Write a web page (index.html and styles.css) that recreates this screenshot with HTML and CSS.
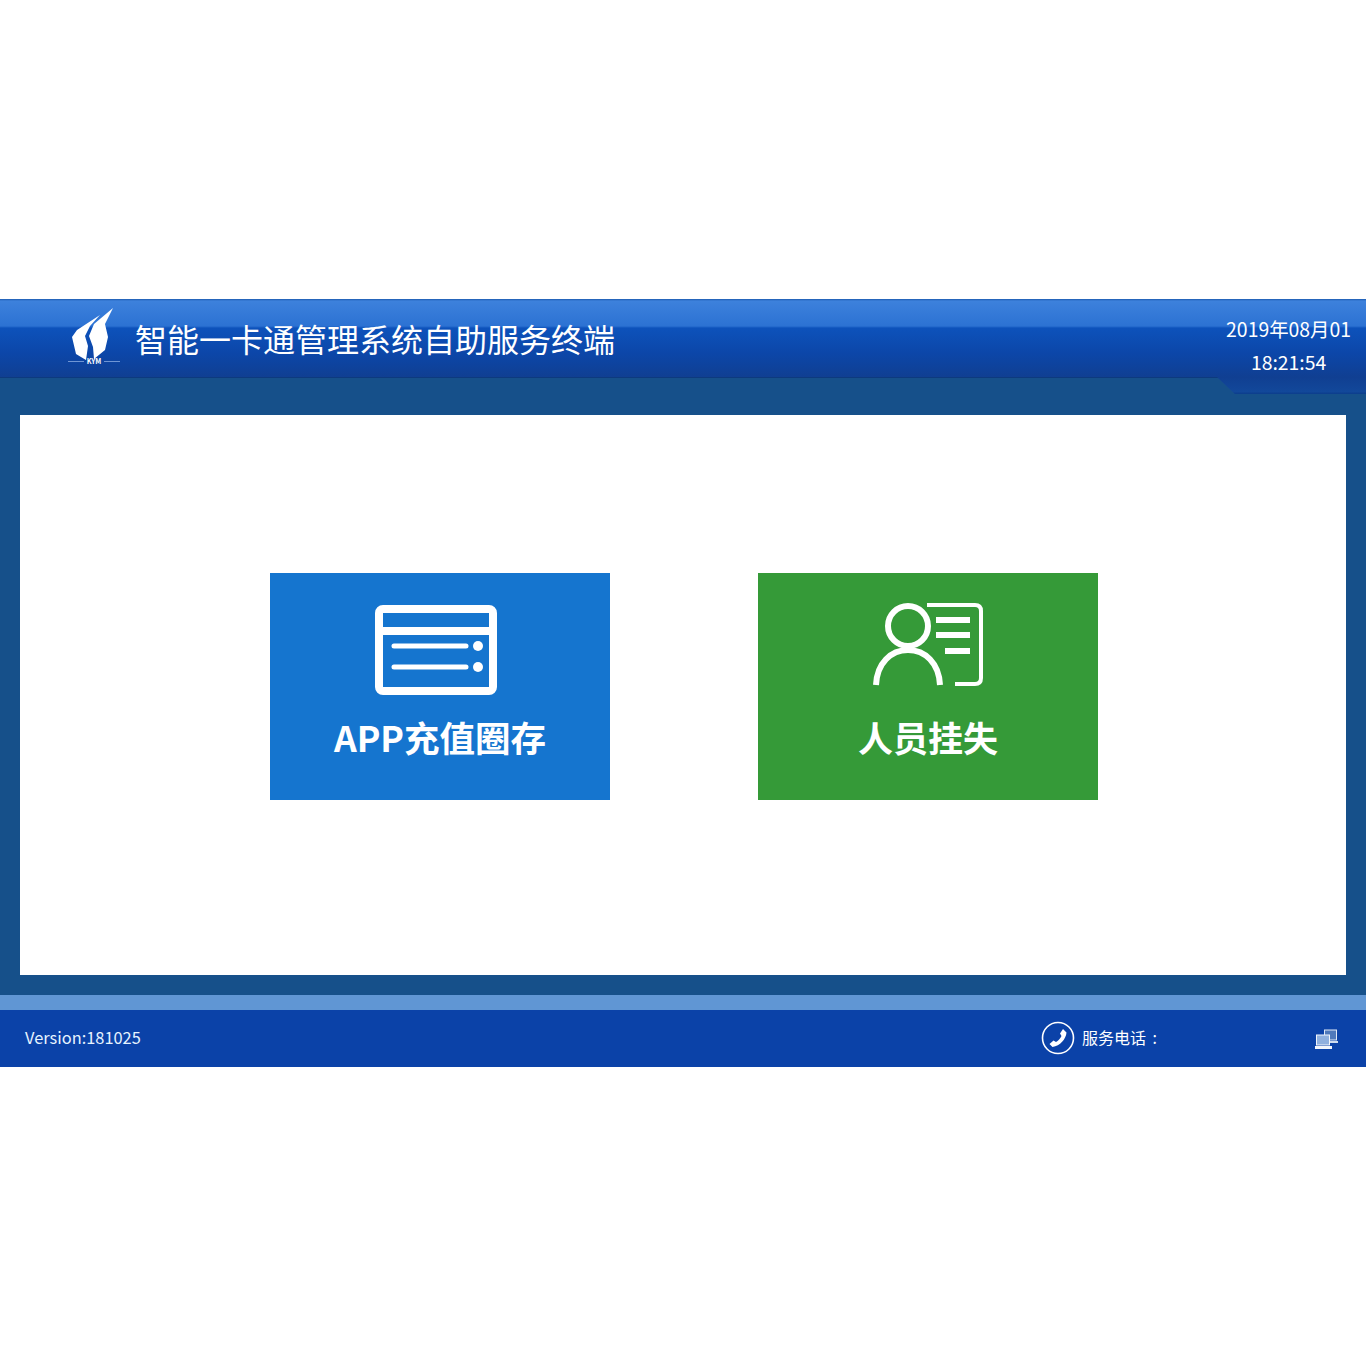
FILE: index.html
```html
<!DOCTYPE html>
<html>
<head>
  <title>智能一卡通管理系统自助服务终端</title>
  <link rel="stylesheet" href="styles.css">
</head>
<body>
  <div class="terminal">
    <div class="header">
      <svg class="logo" width="60" height="64" viewBox="0 0 60 64">
        <path class="logo-wing" d="M36 11 L13 26 L8 33 L12 50 L22 56 L24 42 L21 32 L26 22 Z"/>
        <path class="logo-wing" d="M49 4 L30 20 L25 32 L29 43 L30 55 L41 46 L44 33 L41 20 Z"/>
        <path class="logo-rule" d="M4 57.5 H20 M40 57.5 H56"/>
        <text class="logo-text" x="30" y="60" text-anchor="middle">KYM</text>
      </svg>
      <div class="title">智能一卡通管理系统自助服务终端</div>
      <div class="clock">
        <div>2019年08月01</div>
        <div>18:21:54</div>
      </div>
      <div class="notch"></div>
    </div>

    <div class="main">
      <div class="panel">
        <div class="tile tile-blue">
          <svg class="tile-icon card-icon" width="130" height="90" viewBox="0 0 130 90">
            <rect x="4" y="4" width="114" height="82" rx="4" class="icon-line" stroke-width="8"/>
            <path d="M4 26 H118" class="icon-line" stroke-width="8"/>
            <path d="M19 41 H91 M19 62 H91" class="icon-line round" stroke-width="5"/>
            <circle cx="103" cy="41" r="5" class="icon-dot"/>
            <circle cx="103" cy="62" r="5" class="icon-dot"/>
          </svg>
          <div class="tile-label">APP充值圈存</div>
        </div>
        <div class="tile tile-green">
          <svg class="tile-icon" width="110" height="84" viewBox="0 0 110 84">
            <circle cx="35" cy="23" r="20" class="icon-line" stroke-width="6"/>
            <path d="M3 82 C4 60 18 47 35 47 C52 47 66 60 67 82" class="icon-line" stroke-width="6"/>
            <path d="M54 2 H102 Q108 2 108 8 V75 Q108 81 102 81 H82" class="icon-line" stroke-width="4"/>
            <path d="M63 17 H97 M63 32 H97 M72 48 H97" class="icon-line" stroke-width="6"/>
          </svg>
          <div class="tile-label">人员挂失</div>
        </div>
      </div>
    </div>

    <div class="strip"></div>
    <div class="footer">
      <div class="version">Version:181025</div>
      <div class="service">
        <svg width="34" height="34" viewBox="0 0 34 34">
          <circle cx="17" cy="17" r="15.5" fill="none" stroke="#fff" stroke-width="1.6"/>
          <path d="M22 8 L25.5 11.5 C25 18 19 25 11.5 26 L8.5 23 L12.5 19.5 L15 21 C17 20 19.5 17.5 20.5 15 L19 12.5 Z" fill="#fff"/>
        </svg>
        <span class="service-text">服务电话 :</span>
      </div>
      <svg class="net-icon" width="24" height="20" viewBox="0 0 24 20">
        <rect x="9.5" y="1" width="12" height="10" fill="#4f79bb" stroke="#dfe8f5"/>
        <path d="M15 12 H23 V14 H15 Z" fill="#cfdcef"/>
        <rect x="1.5" y="6" width="13" height="10" fill="#8fb0de" stroke="#f1f5fb"/>
        <path d="M0 17 H17 V20 H0 Z" fill="#f1f5fb"/>
      </svg>
    </div>
  </div>
</body>
</html>
```

FILE: styles.css
```css
body {
    margin: 0;
    background-color: #fff;
    font-family: "Noto Sans CJK SC", "Noto Sans", sans-serif;
    color: #fff;
}

.terminal {
    padding-top: 299px;
}

/* header bar */
.header {
    position: relative;
    height: 79px;
    box-sizing: border-box;
    display: flex;
    align-items: flex-start;
    padding-left: 64px;
    background: linear-gradient(to bottom, #1d5cb0 0, #3d81dc 2px, #2c72d3 27px, #0d52bb 29px, #0c46a8 55px, #103f92 100%);
    border-bottom: 1px solid #0d3a7e;
}

.logo {
    margin-top: 5px;
}

.logo-wing {
    fill: #fff;
}

.logo-rule {
    stroke: #6f95d4;
    stroke-width: 1;
    fill: none;
}

.logo-text {
    fill: #fff;
    font-size: 7px;
    font-weight: 700;
}

.title {
    margin-left: 11px;
    margin-top: 15px;
    font-size: 32px;
    line-height: 48px;
    font-weight: 400;
    white-space: nowrap;
}

.clock {
    position: relative;
    z-index: 1;
    margin-left: auto;
    margin-right: 15px;
    margin-top: 13px;
    font-size: 19.4px;
    line-height: 33px;
    text-align: center;
    white-space: nowrap;
}

.notch {
    position: absolute;
    right: 0;
    top: 78px;
    width: 149px;
    height: 17px;
    background: linear-gradient(to bottom, #103f92 0, #12489a 15px, #0d3f8e 16px);
    clip-path: polygon(0 0, 100% 0, 100% 100%, 12% 100%);
}

/* main area */
.main {
    height: 617px;
    box-sizing: border-box;
    padding: 37px 20px 20px;
    background-color: #16508a;
}

.panel {
    height: 560px;
    box-sizing: border-box;
    padding: 158px 0 0 250px;
    display: flex;
    gap: 148px;
    background-color: #fff;
}

.tile {
    width: 340px;
    height: 227px;
    box-sizing: border-box;
    padding-top: 30px;
    display: flex;
    flex-direction: column;
    align-items: center;
}

.tile-blue {
    background-color: #1575cf;
}

.tile-green {
    background-color: #359a38;
}

.tile-icon {
    display: block;
}

.card-icon {
    margin-top: 2px;
}

.icon-line {
    fill: none;
    stroke: #fff;
}

.round {
    stroke-linecap: round;
}

.icon-dot {
    fill: #fff;
}

.tile-label {
    font-size: 35.5px;
    line-height: 50px;
    font-weight: 700;
    white-space: nowrap;
}

.tile-blue .tile-label {
    margin-top: 17px;
}

.tile-green .tile-label {
    margin-top: 25px;
    font-size: 35px;
}

/* footer */
.strip {
    height: 15px;
    background-color: #6096d4;
}

.footer {
    height: 57px;
    display: flex;
    align-items: center;
    padding: 0 27px 0 25px;
    background-color: #0b42a8;
}

.version {
    font-size: 16.4px;
    margin-top: -4px;
    color: #e6f3ff;
}

.service {
    margin-left: auto;
    margin-right: 154px;
    display: flex;
    align-items: center;
    gap: 7px;
    font-size: 16px;
    width: 120px;
    margin-top: -2px;
    white-space: nowrap;
}

.service-text {
    margin-top: -2px;
    word-spacing: 3px;
}

.net-icon {
    display: block;
    margin-top: 1px;
}
```
